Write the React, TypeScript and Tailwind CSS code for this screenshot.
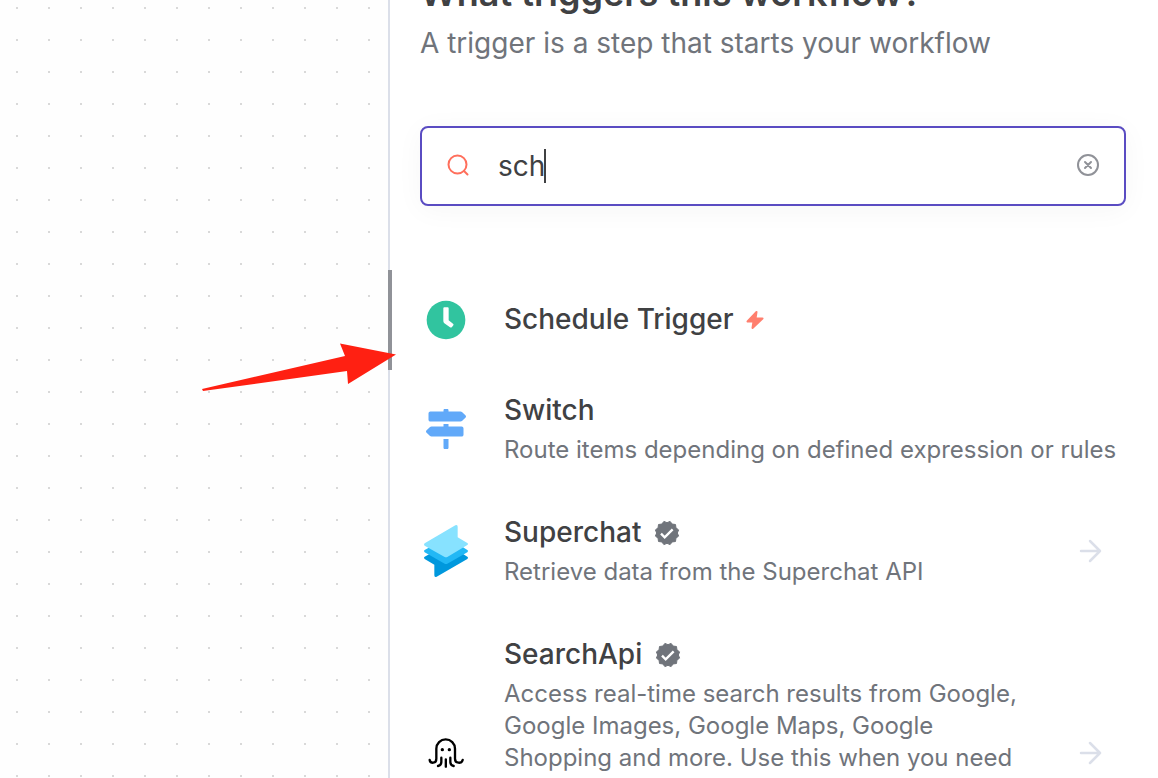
import type { ReactNode } from "react";
import { FaMapSigns } from "react-icons/fa";

type Item = {
  name: string;
  description?: string;
  icon: ReactNode;
  trigger?: boolean;
  verified?: boolean;
  hasActions?: boolean;
  long?: boolean;
};

function ClockIcon() {
  return (
    <svg viewBox="0 0 120 120" className="size-10">
      <circle cx="60" cy="60" r="58" fill="#31c49f" />
      <path fill="#fff" d="M52 25Q52 22 55 22H65Q68 22 68 25V61L81 71Q84 73 82 76L78 81Q75 84 72 82L55 70Q52 67 52 63Z" />
    </svg>
  );
}

function SuperchatIcon() {
  return (
    <svg viewBox="42 45 132 156" className="h-[52px] w-11">
      <path fill="#0098dd" d="M44 140L60 131H158L172 140Q176 143 172 147L80 200Q73 203 73 196V164L44 147Q40 143 44 140Z" />
      <path fill="#22b8f5" d="M44 120L60 111H158L172 120Q176 123 172 127L112 161Q108 163 104 161L44 127Q40 123 44 120Z" />
      <path fill="#87e2ff" d="M44 100L136 46Q143 43 143 50V82L172 99Q176 102 172 105L112 141Q108 143 104 141L44 107Q40 104 44 100Z" />
    </svg>
  );
}

function OctopusIcon() {
  return (
    <svg viewBox="54 52 108 90" className="h-[30px] w-9" fill="none" stroke="#000" strokeWidth="7" strokeLinecap="round">
      <path d="M59 118C61 130 79 129 79 114V84A28 28 0 0 1 135 84V114C135 129 155 130 158 118" />
      <path d="M94 111V123C94 131 90 135 84 136M121 111V123C121 131 125 135 131 136M107.500 116V138" />
      <circle cx="97" cy="87" r="5" fill="#000" stroke="none" />
      <circle cx="118" cy="87" r="5" fill="#000" stroke="none" />
    </svg>
  );
}

function BoltIcon() {
  return (
    <svg viewBox="0 0 18 20" className="h-5 w-[18px]" fill="#ff7f6e" stroke="#ff7f6e" strokeWidth="2" strokeLinejoin="round">
      <path d="M10.500 2L1.500 11.500H7.500L6.500 18L16.500 8.500H9.500Z" />
    </svg>
  );
}

// 12 pointed seal, a valley every 30 degrees starting at the top
const sealPoints = Array.from({ length: 24 }, (_, i) => {
  const r = i % 2 ? 36 : 31;
  const a = (i * Math.PI) / 12;
  return `${(42 + r * Math.sin(a)).toFixed(1)},${(42 - r * Math.cos(a)).toFixed(1)}`;
}).join(" ");

function VerifiedIcon() {
  return (
    <svg viewBox="0 0 84 84" className="size-7">
      <polygon points={sealPoints} fill="#70747b" stroke="#70747b" strokeWidth="3" strokeLinejoin="round" />
      <path d="M24 44L35 55L59 31" fill="none" stroke="#fff" strokeWidth="7" />
    </svg>
  );
}

function ArrowIcon() {
  return (
    <svg viewBox="0 0 24 24" className="h-6 w-6" fill="none" stroke="#dbdfe9" strokeWidth="2.500" strokeLinecap="round" strokeLinejoin="round">
      <path d="M3 12H22M12 2L22 12L12 22" />
    </svg>
  );
}

const items: Item[] = [
  {
    name: "Schedule Trigger",
    icon: <ClockIcon />,
    trigger: true,
  },
  {
    name: "Switch",
    description: "Route items depending on defined expression or rules",
    icon: <FaMapSigns className="size-10 text-[#61a9f9]" />,
  },
  {
    name: "Superchat",
    description: "Retrieve data from the Superchat API",
    icon: <SuperchatIcon />,
    verified: true,
    hasActions: true,
  },
  {
    name: "SearchApi",
    description:
      "Access real-time search results from Google, Google Images, Google Maps, Google Shopping and more. Use this when you need",
    icon: <OctopusIcon />,
    verified: true,
    hasActions: true,
    long: true,
  },
];

function NodeItem({ item }: { item: Item }) {
  return (
    <li className="flex min-h-12 items-center gap-8">
      <div className="flex w-[52px] shrink-0 justify-center">{item.icon}</div>
      <div className="min-w-0 flex-1">
        <div className="flex items-center gap-3">
          <h2 className="pb-0.5 text-[28px] leading-9 font-medium text-[#404143]">{item.name}</h2>
          {item.trigger && <BoltIcon />}
          {item.verified && <VerifiedIcon />}
        </div>
        {item.description && (
          <p className={item.long ? "mt-1 min-h-48 text-2xl text-[#70747b]" : "mt-1 text-2xl text-[#70747b]"}>
            {item.description}
          </p>
        )}
      </div>
      {item.hasActions && (
        <button type="button" aria-label={"Open " + item.name} className="mr-6 ml-2 shrink-0">
          <ArrowIcon />
        </button>
      )}
    </li>
  );
}

export default function App() {
  return (
    <div className="relative flex h-screen overflow-hidden bg-white font-['Inter',sans-serif] [font-optical-sizing:none]">
      <div className="w-[388px] shrink-0 bg-[#fefefe] bg-[linear-gradient(#fefefe_30px,transparent_30px),linear-gradient(90deg,#d9d9d9_2px,#fefefe_2px)] bg-size-[32px_32px] bg-position-[16px_9px]" />

      <main className="relative min-w-0 flex-1 border-l-2 border-[#dbdfe9] pr-8 pl-[30px]">
        <div className="absolute top-[270px] -left-0.5 h-[100px] w-1 bg-[#909298]" />

        <header className="-mt-8">
          <h1 className="text-4xl leading-[50px] font-semibold text-[#404143]">What triggers this workflow?</h1>
          <p className="mt-1.5 text-[28px] leading-[38px] text-[#70747b]">A trigger is a step that starts your workflow</p>
        </header>

        <label className="relative mt-16 flex h-20 items-center rounded-lg border-2 border-[#5a4cc2] bg-white px-6 shadow-[0_4px_28px_rgba(0,0,0,0.04)]">
          <svg viewBox="0 0 24 24" className="h-6 w-6 shrink-0" fill="none" stroke="#ff6f5c" strokeWidth="2" strokeLinecap="round">
            <circle cx="11.500" cy="10.500" r="9" />
            <path d="M18 17L21.500 20.500" />
          </svg>
          <input
            type="text"
            aria-label="Search nodes"
            defaultValue="sch"
            className="ml-7 min-w-0 flex-1 bg-transparent text-[28px] text-[#404143] outline-none"
          />
          <span className="absolute top-[21px] left-[122px] h-[34px] w-0.5 bg-[#404143]" />
          <button type="button" aria-label="Clear search" className="shrink-0">
            <svg viewBox="0 0 24 24" className="h-6 w-6" fill="none" stroke="#909298" strokeWidth="2" strokeLinecap="round">
              <circle cx="12" cy="11" r="10" />
              <path d="M9 8L15 14M15 8L9 14" />
            </svg>
          </button>
        </label>

        <ul className="mt-[90px] flex flex-col gap-12">
          {items.map((item) => (
            <NodeItem key={item.name} item={item} />
          ))}
        </ul>
      </main>

      <svg viewBox="0 0 196 50" className="absolute top-[342px] left-[201px] h-[50px] w-[196px]" fill="#ff2012">
        <path d="M1 47L144 14L139 1.500L195 12.500L147 42L146 29L2 49Z" />
      </svg>
    </div>
  );
}
